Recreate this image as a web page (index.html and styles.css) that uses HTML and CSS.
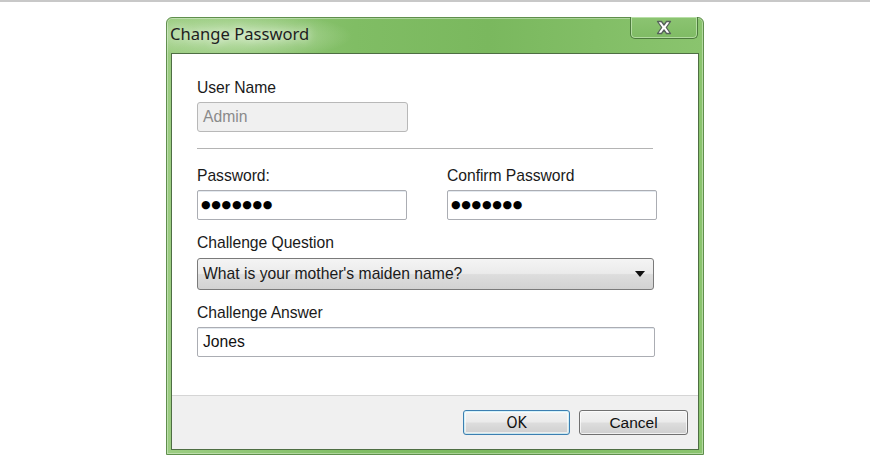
FILE: index.html
```html
<!DOCTYPE html>
<html>
<head>
<meta charset="utf-8">
<link rel="stylesheet" href="styles.css">
</head>
<body>
<div class="topline"></div>
<div class="window">
  <div class="titlebar">
    <span class="title">Change Password</span>
    <button class="close" aria-label="Close">
      <svg width="18" height="15" viewBox="0 0 18 15">
        <path d="M2.5 1.5 L6.5 1.5 L9 5 L11.5 1.5 L15.5 1.5 L11.3 7.5 L15.5 13.5 L11.5 13.5 L9 10 L6.5 13.5 L2.5 13.5 L6.7 7.5 Z" fill="#ffffff" stroke="#56625a" stroke-width="1.3" stroke-linejoin="round"/>
      </svg>
    </button>
  </div>
  <div class="client">
    <div class="form">
      <label class="label">User Name</label>
      <div class="field disabled half">Admin</div>
      <div class="sep"></div>
      <div class="row">
        <div class="col">
          <label class="label">Password:</label>
          <div class="field dots">●●●●●●●</div>
        </div>
        <div class="col">
          <label class="label">Confirm Password</label>
          <div class="field dots">●●●●●●●</div>
        </div>
      </div>
      <label class="label gap">Challenge Question</label>
      <div class="select"><span>What is your mother's maiden name?</span><span class="arrow"></span></div>
      <label class="label gap2">Challenge Answer</label>
      <div class="field answer">Jones</div>
    </div>
    <div class="footer">
      <button class="btn ok">OK</button>
      <button class="btn">Cancel</button>
    </div>
  </div>
</div>
</body>
</html>
```

FILE: styles.css
```css
html, body {
  margin: 0;
  padding: 0;
  background: #ffffff;
  width: 870px;
  height: 455px;
  overflow: hidden;
}
.topline {
  height: 2px;
  background: #c8c8c8;
}
.window {
  width: 528px;
  margin: 15px auto 0;
  padding: 0 4px 4px 4px;
  border: 1px solid #5f8f4c;
  border-radius: 6px 6px 0 0;
  background:
    radial-gradient(ellipse 110px 24px at 75px 18px, rgba(230,246,220,0.6), rgba(230,246,220,0) 100%),
    linear-gradient(90deg, #9ccd82 0%, #80bd64 35%, #7ab85e 60%, #8ac46e 100%);
  box-shadow: inset 0 0 0 1px rgba(255,255,255,0.35);
}
.titlebar {
  height: 35px;
  display: flex;
  align-items: flex-start;
  justify-content: space-between;
}
.title {
  font-family: "Noto Sans", "Open Sans", sans-serif;
  font-size: 16.6px;
  color: #1e1e1e;
  margin-top: 4px;
  margin-left: -1px;
  text-shadow: 0 0 8px rgba(255,255,255,0.9);
}
.close {
  width: 68px;
  height: 22px;
  margin: -1px 1px 0 0;
  padding: 0;
  border: 1px solid #4d7a3d;
  border-top: none;
  border-radius: 0 0 5px 5px;
  background: linear-gradient(#8cc472, #7fbb64);
  box-shadow: inset 0 0 0 1px rgba(220,245,210,0.55);
  display: flex;
  align-items: center;
  justify-content: center;
}
.client {
  background: #ffffff;
  border: 1px solid #4e6e43;
}
.form {
  padding: 26px 43px 38px 25px;
  display: flex;
  flex-direction: column;
  font-family: "Liberation Sans", Arial, sans-serif;
  font-size: 15.7px;
  color: #1a1a1a;
}
.label {
  display: block;
  line-height: 16px;
  height: 16px;
  letter-spacing: -0.05px;
}
.field {
  height: 28px;
  margin-top: 6px;
  border: 1px solid #abadb3;
  border-radius: 2px;
  box-shadow: inset 0 1px 0 #e3e9ef;
  line-height: 28px;
  padding-left: 5px;
  box-sizing: content-box;
  color: #111;
}
.field.half {
  width: 204px;
}
.field.disabled {
  background: #f0f0f0;
  border-color: #b8b8b8;
  color: #8a8a8a;
  box-shadow: none;
  border-radius: 3px;
}
.field.dots {
  font-family: "DejaVu Sans", sans-serif;
  font-size: 11px;
  letter-spacing: 0.7px;
  padding-left: 3px;
  color: #000;
}
.field.answer {
  margin-top: 6px;
}
.sep {
  height: 1px;
  background: #b4b4b4;
  margin-top: 16px;
  margin-right: 2px;
}
.row {
  display: grid;
  grid-template-columns: 210px 210px;
  column-gap: 40px;
  margin-top: 19px;
}
.col .field {
  height: 28px;
  line-height: 28px;
}
.gap {
  margin-top: 15px;
}
.gap2 {
  margin-top: 15px;
}
.select {
  margin-top: 7px;
  height: 30px;
  margin-right: 1px;
  border: 1px solid #7a7a7a;
  border-radius: 3px;
  background: linear-gradient(#f4f4f4 0%, #ebebeb 48%, #dddddd 52%, #d2d2d2 100%);
  display: flex;
  align-items: center;
  justify-content: space-between;
  padding: 0 8px 0 5px;
}
.arrow {
  width: 0;
  height: 0;
  border-left: 5px solid transparent;
  border-right: 5px solid transparent;
  border-top: 6px solid #111;
}
.footer {
  background: #f0f0f0;
  border-top: 1px solid #d5d5d5;
  height: 54px;
  display: flex;
  justify-content: flex-end;
  align-items: flex-start;
  gap: 9px;
  padding: 14px 10px 0 0;
  box-sizing: border-box;
}
.btn {
  width: 109px;
  height: 25px;
  border: 1px solid #707070;
  border-radius: 3px;
  background: linear-gradient(#f2f2f2 0%, #ebebeb 48%, #dddddd 52%, #cfcfcf 100%);
  box-shadow: inset 0 0 0 1px rgba(255,255,255,0.7);
  font-family: "Liberation Sans", Arial, sans-serif;
  font-size: 15.5px;
  color: #111;
  padding: 0;
}
.btn.ok {
  width: 107px;
  border-color: #3c7fb1;
  box-shadow: inset 0 0 0 1px #48d6fb33, inset 0 0 0 2px rgba(255,255,255,0.6);
  font-family: "DejaVu Sans Condensed", "Liberation Sans", sans-serif;
}
```
